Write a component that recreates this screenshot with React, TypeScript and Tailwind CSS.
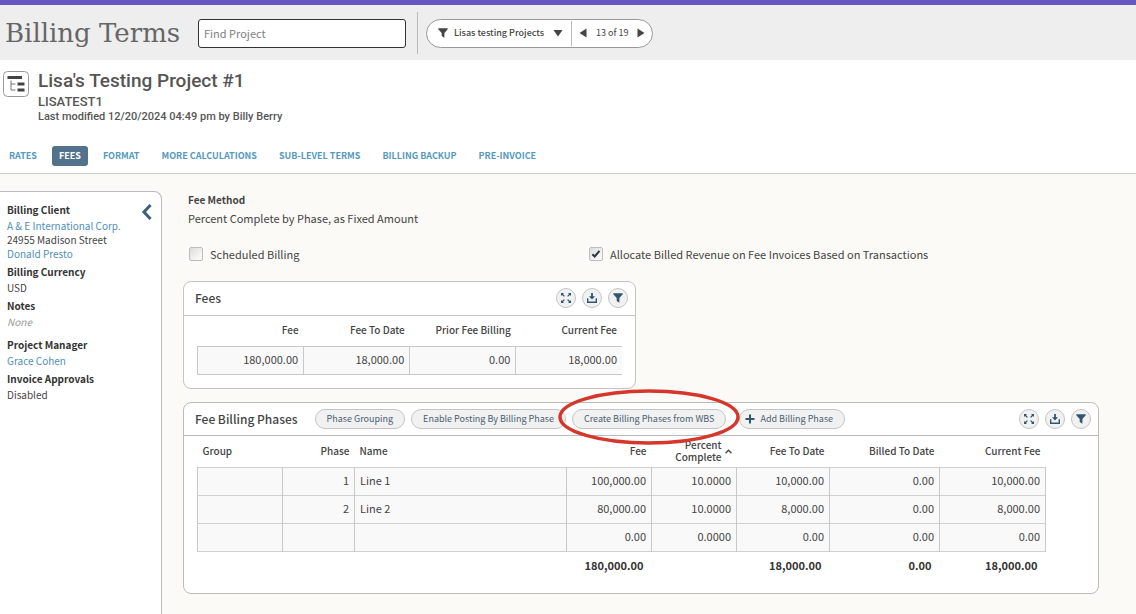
import React from 'react';

type Column = { label: string; width?: string; align?: 'left' | 'right' };

const tabs = ['RATES', 'FEES', 'FORMAT', 'MORE CALCULATIONS', 'SUB-LEVEL TERMS', 'BILLING BACKUP', 'PRE-INVOICE'];

const details = [
  {
    label: 'Billing Client',
    values: [
      { text: 'A & E International Corp.', link: true },
      { text: '24955 Madison Street' },
      { text: 'Donald Presto', link: true },
    ],
  },
  { label: 'Billing Currency', values: [{ text: 'USD' }] },
  { label: 'Notes', values: [{ text: 'None', empty: true }] },
  { label: 'Project Manager', values: [{ text: 'Grace Cohen', link: true }], spaced: true },
  { label: 'Invoice Approvals', values: [{ text: 'Disabled' }] },
] as { label: string; spaced?: boolean; values: { text: string; link?: boolean; empty?: boolean }[] }[];

const feeColumns = ['Fee', 'Fee To Date', 'Prior Fee Billing', 'Current Fee'];
const feeRow = ['180,000.00', '18,000.00', '0.00', '18,000.00'];

const phaseColumns: Column[] = [
  { label: 'Group', width: 'w-[85px]', align: 'left' },
  { label: 'Phase', width: 'w-[72px]' },
  { label: 'Name', align: 'left' },
  { label: 'Fee', width: 'w-[85px]' },
  { label: 'Percent Complete', width: 'w-[85px]' },
  { label: 'Fee To Date', width: 'w-[93px]' },
  { label: 'Billed To Date', width: 'w-[110px]' },
  { label: 'Current Fee', width: 'w-[106px]' },
];

const phaseRows = [
  ['', '1', 'Line 1', '100,000.00', '10.0000', '10,000.00', '0.00', '10,000.00'],
  ['', '2', 'Line 2', '80,000.00', '10.0000', '8,000.00', '0.00', '8,000.00'],
  ['', '', '', '0.00', '0.0000', '0.00', '0.00', '0.00'],
];

const phaseTotals = ['', '', '', '180,000.00', '', '18,000.00', '0.00', '18,000.00'];

const FunnelIcon = ({ className }: { className?: string }) => (
  <svg viewBox="0 0 10 10" className={className} fill="currentColor" aria-hidden="true">
    <path d="M0.3 0.3h9.4v0.9L6.4 4.9V9.7L3.7 8V4.9L0.3 1.2z" />
  </svg>
);

const ExpandIcon = () => (
  <svg viewBox="0 0 12 12" className="size-3" fill="currentColor" stroke="currentColor" strokeWidth="1.3" aria-hidden="true">
    <path d="M1.5 1.5L4.4 4.4M10.5 1.5L7.6 4.4M1.5 10.5L4.4 7.6M10.5 10.5L7.6 7.6" />
    <path stroke="none" d="M1 1h3L1 4zM11 1v3L8 1zM1 11V8L4 11zM11 11H8L11 8z" />
  </svg>
);

const DownloadIcon = () => (
  <svg viewBox="0 0 12 12" className="size-3" fill="currentColor" aria-hidden="true">
    <path d="M5.1 1h1.8v3.2h2.1L6 7.4 3 4.2h2.1z" />
    <path d="M1 6.2h1.4v3.3h7.2V6.2H11v4.700H1z" />
  </svg>
);

const IconButton = ({ label, children }: { label: string; children: React.ReactNode }) => (
  <button
    type="button"
    aria-label={label}
    className="flex size-5 items-center justify-center rounded-full border border-[#c4c4c4] bg-[#f1f1f1] text-[#2f5573]"
  >
    {children}
  </button>
);

const PanelTools = () => (
  <div className="ml-auto flex gap-[6px]">
    <IconButton label="Expand"><ExpandIcon /></IconButton>
    <IconButton label="Download"><DownloadIcon /></IconButton>
    <IconButton label="Filter"><FunnelIcon className="size-[10px]" /></IconButton>
  </div>
);

const PillButton = ({ children }: { children: React.ReactNode }) => (
  <button
    type="button"
    className="flex h-5 items-center gap-[5px] rounded-full border border-[#c4c4c4] bg-[#f1f1f1] px-[11px] text-[9px] whitespace-nowrap text-[#4a6172]"
  >
    {children}
  </button>
);

const Checkbox = ({ label, checked }: { label: string; checked?: boolean }) => (
  <label className="flex items-center gap-[7px]">
    <span className="relative flex size-[14px]">
      <input
        type="checkbox"
        defaultChecked={checked}
        className="peer size-[14px] appearance-none rounded-[2px] border border-[#bdbdbd] bg-linear-to-br from-[#dcdcdc] to-white"
      />
      <svg viewBox="0 0 14 14" className="pointer-events-none absolute inset-0 hidden size-[14px] peer-checked:block" aria-hidden="true">
        <path d="M3.4 7.2l2.3 2.3 4.8-5.6" fill="none" stroke="#2c3440" strokeWidth="2" />
      </svg>
    </span>
    {label}
  </label>
);

export default function App() {
  return (
    <div className="flex min-h-screen flex-col bg-white font-['Noto_Sans_CJK_SC',sans-serif] text-[11px] text-[#444]">
      <header className="flex items-center border-t-5 border-[#6658c0] bg-[#eee] px-[5px] pt-[7px] pb-[6px]">
        <h1 className="w-[193px] font-['DejaVu_Serif',serif] text-[26px] leading-8 whitespace-nowrap text-[#666]">Billing Terms</h1>
        <input
          type="text"
          aria-label="Find Project"
          placeholder="Find Project"
          className="h-[29px] w-[208px] rounded-[3px] border border-[#333] bg-white px-[5px] placeholder:text-[#808080]"
        />
        <div className="ml-[11px] h-[42px] w-px bg-[#bbb]" />
        <div className="ml-2 flex h-[29px] items-center rounded-full border border-[#999] bg-white text-[9px]">
          <button type="button" className="flex items-center pr-2 pl-[11px] font-medium">
            <FunnelIcon className="mr-[6px] size-[10px]" />
            Lisas testing Projects
            <svg viewBox="0 0 10 8" className="ml-[9px] h-2 w-[10px]" fill="currentColor" aria-hidden="true"><path d="M0.5 1h9L5 7.5z" /></svg>
          </button>
          <div className="h-[25px] w-px bg-[#bbb]" />
          <div className="flex items-center gap-[9px] px-[7px]">
            <button type="button" aria-label="Previous">
              <svg viewBox="0 0 8 10" className="h-[10px] w-2" fill="currentColor" aria-hidden="true"><path d="M7.5 0.5v9L0.5 5z" /></svg>
            </button>
            <span>13 of 19</span>
            <button type="button" aria-label="Next">
              <svg viewBox="0 0 8 10" className="h-[10px] w-2" fill="currentColor" aria-hidden="true"><path d="M0.5 0.5v9L7.5 5z" /></svg>
            </button>
          </div>
        </div>
      </header>

      <section className="flex gap-[9px] px-[3px] pt-2 font-[Roboto,sans-serif]">
        <svg viewBox="0 0 26 26" className="mt-[3px] size-[26px] shrink-0" aria-hidden="true">
          <rect x="0.5" y="0.5" width="25" height="25" rx="4" fill="#fff" stroke="#999" />
          <path d="M4.500 5h14.500v3h-14.500zM14.500 11.500h7v3h-7zM14.500 17.500h7v3h-7z" fill="#444" />
          <path d="M8 9.500v9.500h4.500M8 13h4.500" fill="none" stroke="#777" />
        </svg>
        <div className="font-medium text-[#555]">
          <h2 className="text-[19px] leading-[25px]">Lisa&apos;s Testing Project #1</h2>
          <p className="text-[13px] leading-[18px]">LISATEST1</p>
          <p className="text-[11px] leading-[11px]">Last modified 12/20/2024 04:49 pm by Billy Berry</p>
        </div>
      </section>

      <nav className="mt-[24px] flex h-[28px] items-start gap-2 border-b border-[#ccc] px-[2px] text-[9px] font-bold">
        {tabs.map((tab) => (
          <a
            key={tab}
            href="#"
            className={
              tab === 'FEES'
                ? 'rounded-[3px] bg-[#53728c] px-[7px] leading-5 text-white'
                : 'px-[7px] leading-5 text-[#5599bf]'
            }
          >
            {tab}
          </a>
        ))}
      </nav>

      <div className="flex flex-1 bg-[#fbfaf6] pt-[17px]">
        <aside className="relative w-[162px] shrink-0 rounded-tr-lg border-t border-r border-[#bbb] bg-white pt-[9px] pl-[7px] text-[10px]">
          <button type="button" aria-label="Collapse" className="absolute top-3 right-[9px] text-[#3f6079]">
            <svg viewBox="0 0 11 16" className="h-4 w-[11px]" fill="none" stroke="currentColor" strokeWidth="3" aria-hidden="true">
              <path d="M9.500 1L3 8l6.500 7" />
            </svg>
          </button>
          <dl>
            {details.map((item) => (
              <div key={item.label} className={item.spaced ? 'mt-[7px]' : 'mt-[2px] first:mt-0'}>
                <dt className="leading-[18px] font-bold text-[#333]">{item.label}</dt>
                {item.values.map((value) => (
                  <dd key={value.text} className={value.empty ? 'leading-[14px] text-[#999] italic' : 'leading-[14px]'}>
                    {value.link ? <a href="#" className="text-[#4f8fb9]">{value.text}</a> : value.text}
                  </dd>
                ))}
              </div>
            ))}
          </dl>
        </aside>

        <main className="min-w-0 flex-1 pr-[37px] pb-5 pl-[21px]">
          <div className="pl-[5px]">
            <h3 className="text-[10px] leading-[18px] font-bold">Fee Method</h3>
            <p className="leading-[18px]">Percent Complete by Phase, as Fixed Amount</p>
          </div>
          <div className="mt-[19px] grid grid-cols-[400px_1fr] pl-[6px]">
            <Checkbox label="Scheduled Billing" />
            <Checkbox label="Allocate Billed Revenue on Fee Invoices Based on Transactions" checked />
          </div>

          <section className="mt-[18px] w-[453px] rounded-lg border border-[#c4c4c4] bg-white">
            <div className="flex h-[34px] items-center border-b border-[#c4c4c4] pr-[7px] pl-[11px]">
              <h3 className="text-[12px] font-medium">Fees</h3>
              <PanelTools />
            </div>
            <div className="px-[13px] pb-[13px]">
              <table className="w-full table-fixed border-collapse text-right">
                <thead className="text-[10px]">
                  <tr className="h-[31px]">
                    {feeColumns.map((label) => (
                      <th key={label} className="px-[5px] pb-[2px] font-medium">{label}</th>
                    ))}
                  </tr>
                </thead>
                <tbody>
                  <tr className="h-7 border-y border-[#c8c8c8] bg-[#f9f9f9]">
                    {feeRow.map((value, idx) => (
                      <td key={idx} className="border-l border-[#c8c8c8] px-[5px] pb-[2px]">{value}</td>
                    ))}
                  </tr>
                </tbody>
              </table>
            </div>
          </section>

          <section className="mt-[13px] rounded-lg border border-[#bbb] bg-white">
            <div className="flex h-[33px] items-center gap-[6px] border-b border-[#bbb] pr-[7px] pl-[11px]">
              <h3 className="mr-[11px] text-[12px] font-medium whitespace-nowrap">Fee Billing Phases</h3>
              <PillButton>Phase Grouping</PillButton>
              <PillButton>Enable Posting By Billing Phase</PillButton>
              <div className="relative mr-[7px]">
                <PillButton>Create Billing Phases from WBS</PillButton>
                <svg viewBox="0 0 182 56" className="pointer-events-none absolute -top-5 -left-[14px] h-14 w-[182px] max-w-none" aria-hidden="true">
                  <ellipse cx="91" cy="28" rx="89" ry="26" fill="none" stroke="#d6372c" strokeWidth="3.5" />
                </svg>
              </div>
              <PillButton>
                <svg viewBox="0 0 10 10" className="-ml-[6px] size-[10px]" stroke="#2f5573" strokeWidth="2" aria-hidden="true"><path d="M5 0.500v9M0.500 5h9" /></svg>
                Add Billing Phase
              </PillButton>
              <PanelTools />
            </div>
            <div className="pr-[52px] pb-[14px] pl-[13px]">
              <table className="w-full table-fixed border-collapse text-right">
                <thead className="text-[10px]">
                  <tr className="h-[31px]">
                    {phaseColumns.map(({ label, width, align }) => (
                      <th key={label} className={`px-[5px] leading-3 font-medium ${width ?? ''} ${align === 'left' ? 'text-left' : ''}`}>
                        {label === 'Percent Complete' ? (
                          <span className="flex items-center justify-end gap-[3px]">
                            <span className="w-12">{label}</span>
                            <svg viewBox="0 0 7 5" className="h-[5px] w-[7px] shrink-0" fill="none" stroke="currentColor" strokeWidth="1.3" aria-hidden="true"><path d="M0.600 4.200L3.500 1.200l2.900 3" /></svg>
                          </span>
                        ) : label}
                      </th>
                    ))}
                  </tr>
                </thead>
                <tbody>
                  {phaseRows.map((row, r) => (
                    <tr key={r} className="h-7 border-y border-[#d0d0d0] bg-[#f9f9f9]">
                      {row.map((value, idx) => (
                        <td key={idx} className={`border-x border-[#c8c8c8] px-[5px] pb-[2px] ${phaseColumns[idx].align === 'left' ? 'text-left' : ''}`}>{value}</td>
                      ))}
                    </tr>
                  ))}
                </tbody>
                <tfoot>
                  <tr className="h-7 font-bold text-[#333]">
                    {phaseTotals.map((value, idx) => (
                      <td key={idx} className="pr-2">{value}</td>
                    ))}
                  </tr>
                </tfoot>
              </table>
            </div>
          </section>
        </main>
      </div>
    </div>
  );
}
